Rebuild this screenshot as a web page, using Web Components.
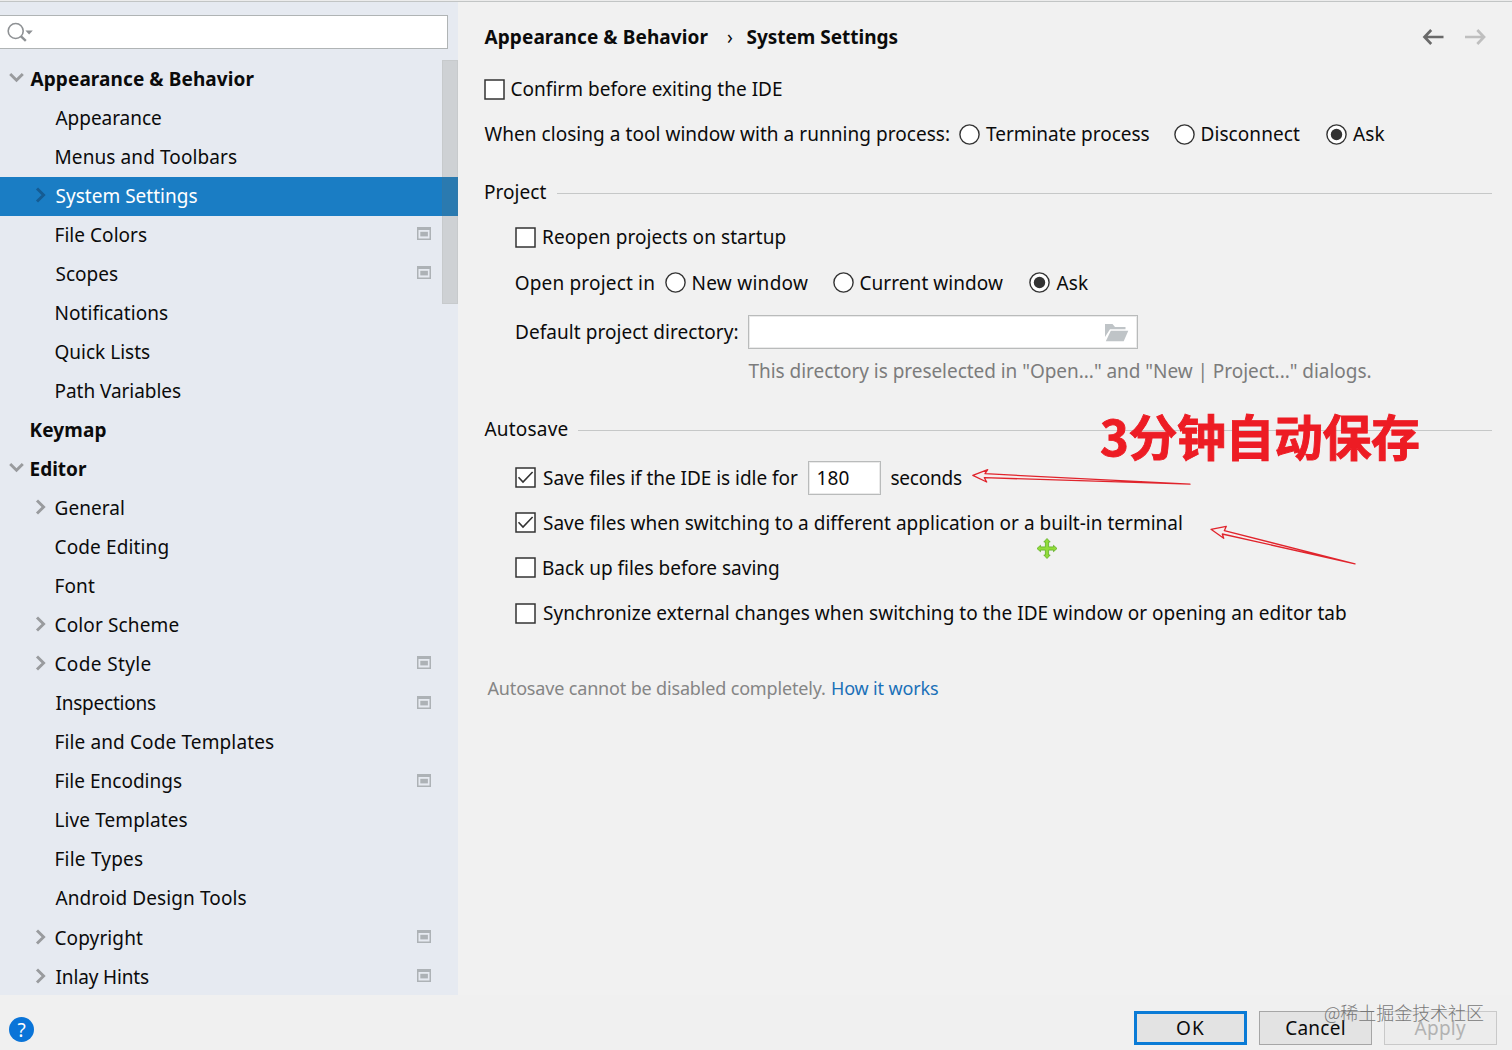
<!DOCTYPE html>
<html lang="en">
<head>
<meta charset="utf-8">
<title>Settings</title>
<style>
html, body {
  margin: 0;
  width: 1512px;
  height: 1050px;
  overflow: hidden;
}
body {
  font-family: "Noto Sans", "Open Sans", "Noto Sans CJK SC", sans-serif;
  font-size: 19px;
  color: #0b0b0b;
}
</style>
</head>
<body>
<settings-dialog></settings-dialog>

<script>
/**
 * Create a template from a string of markup.
 *
 * @param {string} html the markup.
 * @returns {HTMLTemplateElement} the template.
 */
const makeTemplate = (html) => {
  const template = document.createElement('template')
  template.innerHTML = html
  return template
}

const ruler = document.createElement('canvas').getContext('2d')

/**
 * A one line label. Its letters are tracked so that it spans "w" pixels.
 */
const labelTemplate = makeTemplate(`
<style>
:host {
  display: block;
  flex: none;
  padding-top: .8px;
  white-space: nowrap;
  font-variant-ligatures: none;
}
span {
  display: block;
}
</style>
<span><slot></slot></span>
`)

customElements.define(
  'fit-label',
  class extends HTMLElement {
    constructor () {
      super()
      this.attachShadow({ mode: 'open' }).appendChild(
        labelTemplate.content.cloneNode(true)
      )
    }

    connectedCallback () {
      const text = this.textContent
      const width = Number(this.getAttribute('w'))
      const style = getComputedStyle(this)
      ruler.font = `${style.fontWeight} ${style.fontSize} ${style.fontFamily}`
      const box = ruler.measureText(text)
      const ink = box.actualBoundingBoxRight + box.actualBoundingBoxLeft
      this.style.width = width + 'px'
      const span = this.shadowRoot.querySelector('span')
      span.style.marginLeft = box.actualBoundingBoxLeft + 'px'
      if (text.length > 1) {
        span.style.letterSpacing = (width - ink) / (text.length - 1) + 'px'
      }
    }
  }
)

/**
 * Check box with its label in the slot.
 */
const checkTemplate = makeTemplate(`
<style>
:host {
  display: flex;
  align-items: center;
  gap: 7px;
}
svg {
  flex: none;
  display: block;
}
path {
  display: none;
}
:host([checked]) path {
  display: block;
}
</style>
<svg width="21" height="21" viewBox="0 0 21 21">
  <rect x="1" y="1" width="19" height="19" fill="#fff" stroke="#333" stroke-width="1.5"/>
  <path d="M3.5 10.3 L8 15 L17.6 5" fill="none" stroke="#333" stroke-width="1.6"/>
</svg>
<slot></slot>
`)

customElements.define(
  'check-box',
  class extends HTMLElement {
    constructor () {
      super()
      this.attachShadow({ mode: 'open' }).appendChild(
        checkTemplate.content.cloneNode(true)
      )
    }
  }
)

/**
 * Radio button with its label in the slot.
 */
const radioTemplate = makeTemplate(`
<style>
:host {
  display: flex;
  align-items: center;
  gap: 6.5px;
}
svg {
  flex: none;
  display: block;
}
.dot {
  display: none;
}
:host([checked]) .dot {
  display: block;
}
</style>
<svg width="21" height="21" viewBox="0 0 21 21">
  <circle cx="10.5" cy="10.5" r="9.6" fill="#fff" stroke="#333" stroke-width="1.4"/>
  <circle class="dot" cx="10.5" cy="10.5" r="5.7" fill="#333"/>
</svg>
<slot></slot>
`)

customElements.define(
  'radio-button',
  class extends HTMLElement {
    constructor () {
      super()
      this.attachShadow({ mode: 'open' }).appendChild(
        radioTemplate.content.cloneNode(true)
      )
    }
  }
)

/**
 * Section title followed by a line.
 */
const sectionTemplate = makeTemplate(`
<style>
:host {
  display: flex;
  align-items: center;
  gap: 10px;
}
i {
  flex: 1;
  height: 1px;
  margin-top: 3px;
  background: #c6c8c8;
}
</style>
<slot></slot><i></i>
`)

customElements.define(
  'section-title',
  class extends HTMLElement {
    constructor () {
      super()
      this.attachShadow({ mode: 'open' }).appendChild(
        sectionTemplate.content.cloneNode(true)
      )
    }
  }
)

/**
 * Push button.
 */
const buttonTemplate = makeTemplate(`
<style>
:host {
  display: flex;
  align-items: center;
  justify-content: center;
  box-sizing: border-box;
  width: 112.4px;
  height: 34px;
  border: 1px solid #a6a6a6;
  background: #e3e3e3;
}
:host([primary]) {
  border: 3px solid #0a7bd6;
}
:host([disabled]) {
  border-color: #c9c9c9;
  background: #ececec;
  color: #b2b2b2;
}
</style>
<slot></slot>
`)

customElements.define(
  'push-button',
  class extends HTMLElement {
    constructor () {
      super()
      this.attachShadow({ mode: 'open' }).appendChild(
        buttonTemplate.content.cloneNode(true)
      )
    }
  }
)

/**
 * One row of the settings tree.
 */
const itemTemplate = makeTemplate(`
<style>
:host {
  display: grid;
  grid-template-columns: 55.5px 1fr 41px;
  align-items: center;
  height: 39.04px;
}
:host([top]) {
  grid-template-columns: 30.5px 1fr 41px;
  font-weight: bold;
}
:host([selected]) {
  background: #1a7dc4;
  color: #fff;
}
slot {
  display: block;
  line-height: 36px;
  height: 39px;
}
svg {
  display: none;
  fill: none;
  stroke: #999b9e;
  stroke-width: 2.9;
}
:host([selected]) svg {
  stroke: #155c93;
}
.right {
  margin: 0 0 3px 34.5px;
}
.down {
  margin: 0 0 4px 9px;
}
:host([arrow="right"]) .right,
:host([arrow="down"]) .down,
:host([page]) .page {
  display: block;
}
.page {
  margin-bottom: 4px;
  stroke: none;
  fill: #adb2b6;
}
</style>
<div>
  <svg class="right" width="11" height="16" viewBox="0 0 11 16"><path d="M2 1.5 L8.6 8 L2 14.5"/></svg>
  <svg class="down" width="15" height="11" viewBox="0 0 15 11"><path d="M1.2 2 L7.5 8.3 L13.8 2"/></svg>
</div>
<slot></slot>
<div>
  <svg class="page" width="14" height="13" viewBox="0 0 14 13">
    <path fill-rule="evenodd" d="M0 0 H14 V13 H0 Z M1.5 3 V11.5 H12.5 V3 Z"/>
    <rect x="3.3" y="4.8" width="7.6" height="4.6"/>
  </svg>
</div>
`)

customElements.define(
  'tree-item',
  class extends HTMLElement {
    constructor () {
      super()
      this.attachShadow({ mode: 'open' }).appendChild(
        itemTemplate.content.cloneNode(true)
      )
    }
  }
)

/**
 * Search field and tree on the left.
 */
const sideTemplate = makeTemplate(`
<style>
:host {
  display: block;
  position: relative;
  width: 458px;
  height: 993px;
  overflow: hidden;
  background: #e6eaf1;
}
.search {
  box-sizing: border-box;
  width: 448px;
  height: 34px;
  margin: 13px 0 11px;
  border: 1px solid #b0b4b5;
  border-left: 0;
  background: #fff;
}
.search svg {
  display: block;
}
.thumb {
  position: absolute;
  left: 442px;
  top: 58px;
  width: 16px;
  height: 244px;
  box-sizing: border-box;
  border: 1px solid rgba(110, 110, 105, .07);
  background: rgba(110, 110, 100, .2);
}
</style>
<div class="search">
  <svg width="40" height="32" viewBox="0 0 40 32">
    <circle cx="15.7" cy="15" r="7.5" fill="none" stroke="#8e9194" stroke-width="1.6"/>
    <path d="M21 20.3 L25.8 24.8" stroke="#8e9194" stroke-width="2.4"/>
    <path d="M25.4 14.6 H32.8 L29.1 18.6 Z" fill="#8e9194"/>
  </svg>
</div>
<nav></nav>
<div class="thumb"></div>
`)

// label, width, attributes
const treeItems = [
  ['Appearance & Behavior', 224, 'top arrow="down"'],
  ['Appearance', 105.5, ''],
  ['Menus and Toolbars', 181.5, ''],
  ['System Settings', 142, 'selected arrow="right"'],
  ['File Colors', 91.5, 'page'],
  ['Scopes', 62.5, 'page'],
  ['Notifications', 112.5, ''],
  ['Quick Lists', 94.5, ''],
  ['Path Variables', 125.5, ''],
  ['Keymap', 76, 'top'],
  ['Editor', 56.5, 'top arrow="down"'],
  ['General', 68.5, 'arrow="right"'],
  ['Code Editing', 113, ''],
  ['Font', 39.5, ''],
  ['Color Scheme', 123, 'arrow="right"'],
  ['Code Style', 95, 'arrow="right" page'],
  ['Inspections', 100.5, 'page'],
  ['File and Code Templates', 218.5, ''],
  ['File Encodings', 126.5, 'page'],
  ['Live Templates', 132, ''],
  ['File Types', 87.5, ''],
  ['Android Design Tools', 191, ''],
  ['Copyright', 87.5, 'arrow="right" page'],
  ['Inlay Hints', 93.5, 'arrow="right" page']
]

customElements.define(
  'settings-tree',
  class extends HTMLElement {
    constructor () {
      super()
      this.attachShadow({ mode: 'open' }).appendChild(
        sideTemplate.content.cloneNode(true)
      )
      this._nav = this.shadowRoot.querySelector('nav')
    }

    connectedCallback () {
      this._nav.innerHTML = treeItems.map(([label, width, attributes]) =>
        `<tree-item ${attributes}><fit-label w="${width}">${label.replace('&', '&amp;')}</fit-label></tree-item>`
      ).join('')
    }
  }
)

/**
 * The System Settings page.
 */
const pageTemplate = makeTemplate(`
<style>
:host {
  display: block;
  box-sizing: border-box;
  height: 993px;
  padding: 18px 20px 0 26.5px;
  background: #f1f1f1;
}
.row, section-title {
  display: flex;
  align-items: center;
  height: 34px;
  line-height: 34px;
}
.row.inner {
  margin-left: 30.5px;
}
.title {
  font-weight: bold;
}
.title svg {
  display: block;
}
.field {
  display: flex;
  align-items: center;
  box-sizing: border-box;
  height: 34px;
  border: 1px solid #b9bbbb;
  outline: 1px solid rgba(185, 187, 187, .3);
  outline-offset: -2px;
  background: #fff;
}
.hint {
  color: #7c7c7c;
}
.note {
  font-size: 18px;
  color: #858585;
}
.link {
  color: #1a70b8;
}
</style>
<div class="row title">
  <fit-label w="224">Appearance &amp; Behavior</fit-label>
  <fit-label w="5.5" style="margin: 0 14px 0 18.5px; font-weight: normal">›</fit-label>
  <fit-label w="151">System Settings</fit-label>
  <svg style="margin-left: auto; margin-right: 6px" width="64" height="18" viewBox="0 0 64 18" fill="none" stroke-width="2.7">
    <path d="M21.5 9 H3 M9.2 2 L2.5 9 L9.2 16" stroke="#6a6a6a"/>
    <path d="M43 9 H61.5 M55.3 2 L62 9 L55.3 16" stroke="#bfbfbf"/>
  </svg>
</div>
<div class="row" style="margin-top: 18px">
  <check-box style="margin-left: -1px"><fit-label w="270.5">Confirm before exiting the IDE</fit-label></check-box>
</div>
<div class="row" style="margin-top: 11px">
  <fit-label w="464.5">When closing a tool window with a running process:</fit-label>
  <radio-button style="margin-left: 9.5px"><fit-label w="163.5">Terminate process</fit-label></radio-button>
  <radio-button style="margin-left: 24.5px"><fit-label w="98.5">Disconnect</fit-label></radio-button>
  <radio-button style="margin-left: 25.5px" checked><fit-label w="31.5">Ask</fit-label></radio-button>
</div>

<section-title style="margin-top: 24px"><fit-label w="61.5" style="margin-left: .5px">Project</fit-label></section-title>
<div class="row inner" style="margin-top: 11px">
  <check-box><fit-label w="242.5">Reopen projects on startup</fit-label></check-box>
</div>
<div class="row inner" style="margin-top: 11.5px">
  <fit-label w="138.5" style="margin-left: .7px">Open project in</fit-label>
  <radio-button style="margin-left: 10.8px"><fit-label w="115.5">New window</fit-label></radio-button>
  <radio-button style="margin-left: 25px"><fit-label w="142.5">Current window</fit-label></radio-button>
  <radio-button style="margin-left: 26px" checked><fit-label w="31.5">Ask</fit-label></radio-button>
</div>
<div class="row inner" style="margin-top: 15.5px">
  <fit-label w="221.5" style="margin: 0 10.5px 0 1px">Default project directory:</fit-label>
  <div class="field" style="width: 390px">
    <svg style="margin: 1px 8px 0 auto" width="24" height="18" viewBox="0 0 24 18" fill="#bfc4c7">
      <path d="M0 0 H7.5 L10 3 H20.5 V5.3 H5 L0 13 Z"/>
      <path d="M5.8 6.7 H23.3 L18.7 17.3 H.8 Z"/>
    </svg>
  </div>
</div>
<div class="row hint" style="margin: 5px 0 0 264px">
  <fit-label w="622">This directory is preselected in "Open..." and "New | Project..." dialogs.</fit-label>
</div>

<section-title style="margin-top: 24px"><fit-label w="83">Autosave</fit-label></section-title>
<div class="row inner" style="margin-top: 14.5px">
  <check-box checked><fit-label w="255">Save files if the IDE is idle for</fit-label></check-box>
  <div class="field" style="width: 73px; margin: 0 10px 0 9.5px; padding-left: 9px"><fit-label w="31">180</fit-label></div>
  <fit-label w="71.5">seconds</fit-label>
</div>
<div class="row inner" style="margin-top: 11px">
  <check-box checked><fit-label w="639">Save files when switching to a different application or a built-in terminal</fit-label></check-box>
</div>
<div class="row inner" style="margin-top: 11px">
  <check-box><fit-label w="236">Back up files before saving</fit-label></check-box>
</div>
<div class="row inner" style="margin-top: 11.5px">
  <check-box><fit-label w="803">Synchronize external changes when switching to the IDE window or opening an editor tab</fit-label></check-box>
</div>
<div class="row note" style="margin: 41px 0 0 3px">
  <fit-label w="337.5">Autosave cannot be disabled completely.</fit-label>
  <fit-label class="link" w="106" style="margin-left: 7px">How it works</fit-label>
</div>
`)

customElements.define(
  'system-settings',
  class extends HTMLElement {
    constructor () {
      super()
      this.attachShadow({ mode: 'open' }).appendChild(
        pageTemplate.content.cloneNode(true)
      )
    }
  }
)

/**
 * Red notes, arrows and the move cursor which float over the dialog.
 */
const overlayTemplate = makeTemplate(`
<style>
:host {
  position: absolute;
  left: 0;
  top: 0;
  width: 1512px;
  height: 1050px;
  pointer-events: none;
}
svg {
  display: block;
}
fit-label {
  position: absolute;
  font-family: "Noto Sans CJK SC", sans-serif;
}
.red {
  left: 1101px;
  top: 404px;
  line-height: 60px;
  font-size: 49px;
  font-weight: bold;
  color: #ed1c24;
  -webkit-text-stroke: .9px #ed1c24;
}
.mark {
  left: 1325px;
  top: 999px;
  line-height: 24px;
  font-size: 18px;
  font-weight: 300;
  color: #787878;
}
</style>
<svg width="1512" height="1050" viewBox="0 0 1512 1050">
  <g fill="#f6eeee" stroke="#e0242c" stroke-width="1.3" stroke-linejoin="round">
    <path d="M1190 484.2 L985 473.7 L987.7 469.7 L972.8 475.3 L986.7 482 L984.3 477.7 Z"/>
    <path d="M1355 563.8 L1224.3 530.7 L1226.3 526.3 L1211 529.3 L1223.7 538.3 L1222.3 534 Z"/>
  </g>
  <path transform="translate(1047 548.5)" fill="#92dc3a" stroke="#5fae24" stroke-width=".8"
    d="M0 -10 L3.2 -6.5 H1.6 V-1.6 H6.5 V-3.2 L10 0 L6.5 3.2 V1.6 H1.6 V6.5 H3.2 L0 10 L-3.2 6.5 H-1.6 V1.6 H-6.5 V3.2 L-10 0 L-6.5 -3.2 V-1.6 H-1.6 V-6.5 H-3.2 Z"/>
</svg>
<fit-label class="red" w="318">3分钟自动保存</fit-label>
<fit-label class="mark" w="159">@稀土掘金技术社区</fit-label>
`)

customElements.define(
  'note-overlay',
  class extends HTMLElement {
    constructor () {
      super()
      this.attachShadow({ mode: 'open' }).appendChild(
        overlayTemplate.content.cloneNode(true)
      )
    }
  }
)

/**
 * The whole dialog.
 */
const dialogTemplate = makeTemplate(`
<style>
:host {
  display: block;
  position: relative;
  width: 1512px;
  height: 1050px;
  overflow: hidden;
  background: #f0f0f0;
}
.edge {
  height: 1px;
  border-top: 1px solid #ececec;
  background: #c2c5c5;
}
main {
  display: grid;
  grid-template-columns: 458px 1fr;
}
footer {
  display: flex;
  align-items: center;
  gap: 12.5px;
  height: 34px;
  line-height: 29px;
  padding: 16px 15.5px 0 9px;
}
.help {
  display: flex;
  justify-content: center;
  width: 25px;
  height: 25px;
  margin: 3px auto 0 0;
  border-radius: 50%;
  line-height: 25px;
  background: #0a74d8;
  color: #fff;
}
</style>
<div class="edge"></div>
<main>
  <settings-tree></settings-tree>
  <system-settings></system-settings>
</main>
<footer>
  <div class="help"><fit-label w="8">?</fit-label></div>
  <push-button primary><fit-label w="27">OK</fit-label></push-button>
  <push-button><fit-label w="58.5">Cancel</fit-label></push-button>
  <push-button disabled><fit-label w="51.5">Apply</fit-label></push-button>
</footer>
<note-overlay></note-overlay>
`)

customElements.define(
  'settings-dialog',
  class extends HTMLElement {
    constructor () {
      super()
      this.attachShadow({ mode: 'open' }).appendChild(
        dialogTemplate.content.cloneNode(true)
      )
    }
  }
)
</script>
</body>
</html>
